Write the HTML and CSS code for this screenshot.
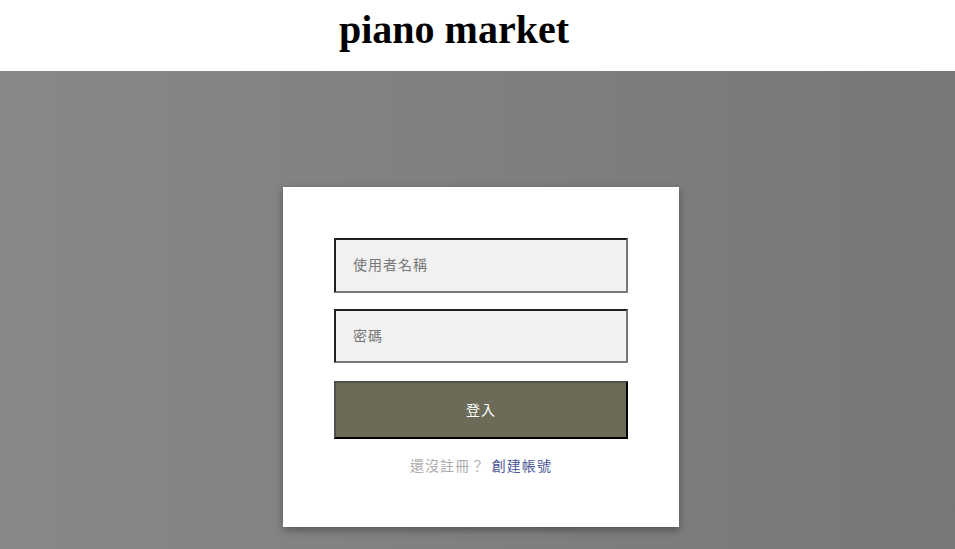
FILE: index.html
```html
<!DOCTYPE html>
<html lang="zh-Hant">
<head>
<meta charset="utf-8">
<title>piano market</title>
<link rel="stylesheet" href="styles.css">
</head>
<body>
<header class="site-header">
  <h1 class="site-title">piano market</h1>
</header>
<main class="stage">
  <form class="login-card">
    <input class="field" type="text" placeholder="使用者名稱">
    <input class="field" type="password" placeholder="密碼">
    <button class="login-btn" type="button">登入</button>
    <p class="register">還沒註冊？ <a class="register-link" href="#">創建帳號</a></p>
  </form>
</main>
</body>
</html>
```

FILE: styles.css
```css
* { box-sizing: border-box; }
html, body {
  margin: 0;
  padding: 0;
  height: 100%;
  overflow: hidden;
}
body {
  font-family: "Noto Sans CJK TC", "Noto Sans", sans-serif;
  background: #fff;
}
.site-header {
  height: 71px;
  padding: 6px 47px 0 0;
  background: #fff;
}
.site-title {
  margin: 0;
  text-align: center;
  font-family: "Liberation Serif", serif;
  font-weight: bold;
  font-size: 40px;
  color: #000;
}
.stage {
  height: 478px;
  background: linear-gradient(to right, #888888, #777775);
  display: flex;
  justify-content: center;
  align-items: flex-start;
  padding: 116px 0 0 7px;
}
.login-card {
  width: 396px;
  height: 340px;
  background: #fff;
  padding: 51px 51px 0;
  box-shadow: 0 3px 8px rgba(0, 0, 0, 0.35);
  display: flex;
  flex-direction: column;
}
.field {
  display: block;
  width: 294px;
  height: 55px;
  margin: 0 0 16px;
  padding: 0 17px 3px;
  background: #f1f1f1;
  border: 2px solid;
  border-color: #1f1f1f #777 #777 #1f1f1f;
  font-family: inherit;
  font-size: 14px;
  letter-spacing: 1px;
  color: #333;
  outline: none;
}
.field::placeholder { color: #777; }
.field + .field { height: 54px; margin-bottom: 18px; }
.login-btn {
  display: block;
  width: 294px;
  height: 58px;
  margin: 0;
  padding: 0 0 2px;
  background: #6b6b58;
  border: 2px solid;
  border-color: #4f4f4f #000 #000 #4f4f4f;
  color: #fff;
  font-family: inherit;
  font-size: 14px;
  letter-spacing: 1px;
}
.register {
  margin: 16px 0 0;
  text-align: center;
  font-size: 14px;
  letter-spacing: 1.1px;
  word-spacing: 2px;
  color: #aaa;
  line-height: 20px;
}
.register-link {
  color: #4a5799;
  text-decoration: none;
}
```
